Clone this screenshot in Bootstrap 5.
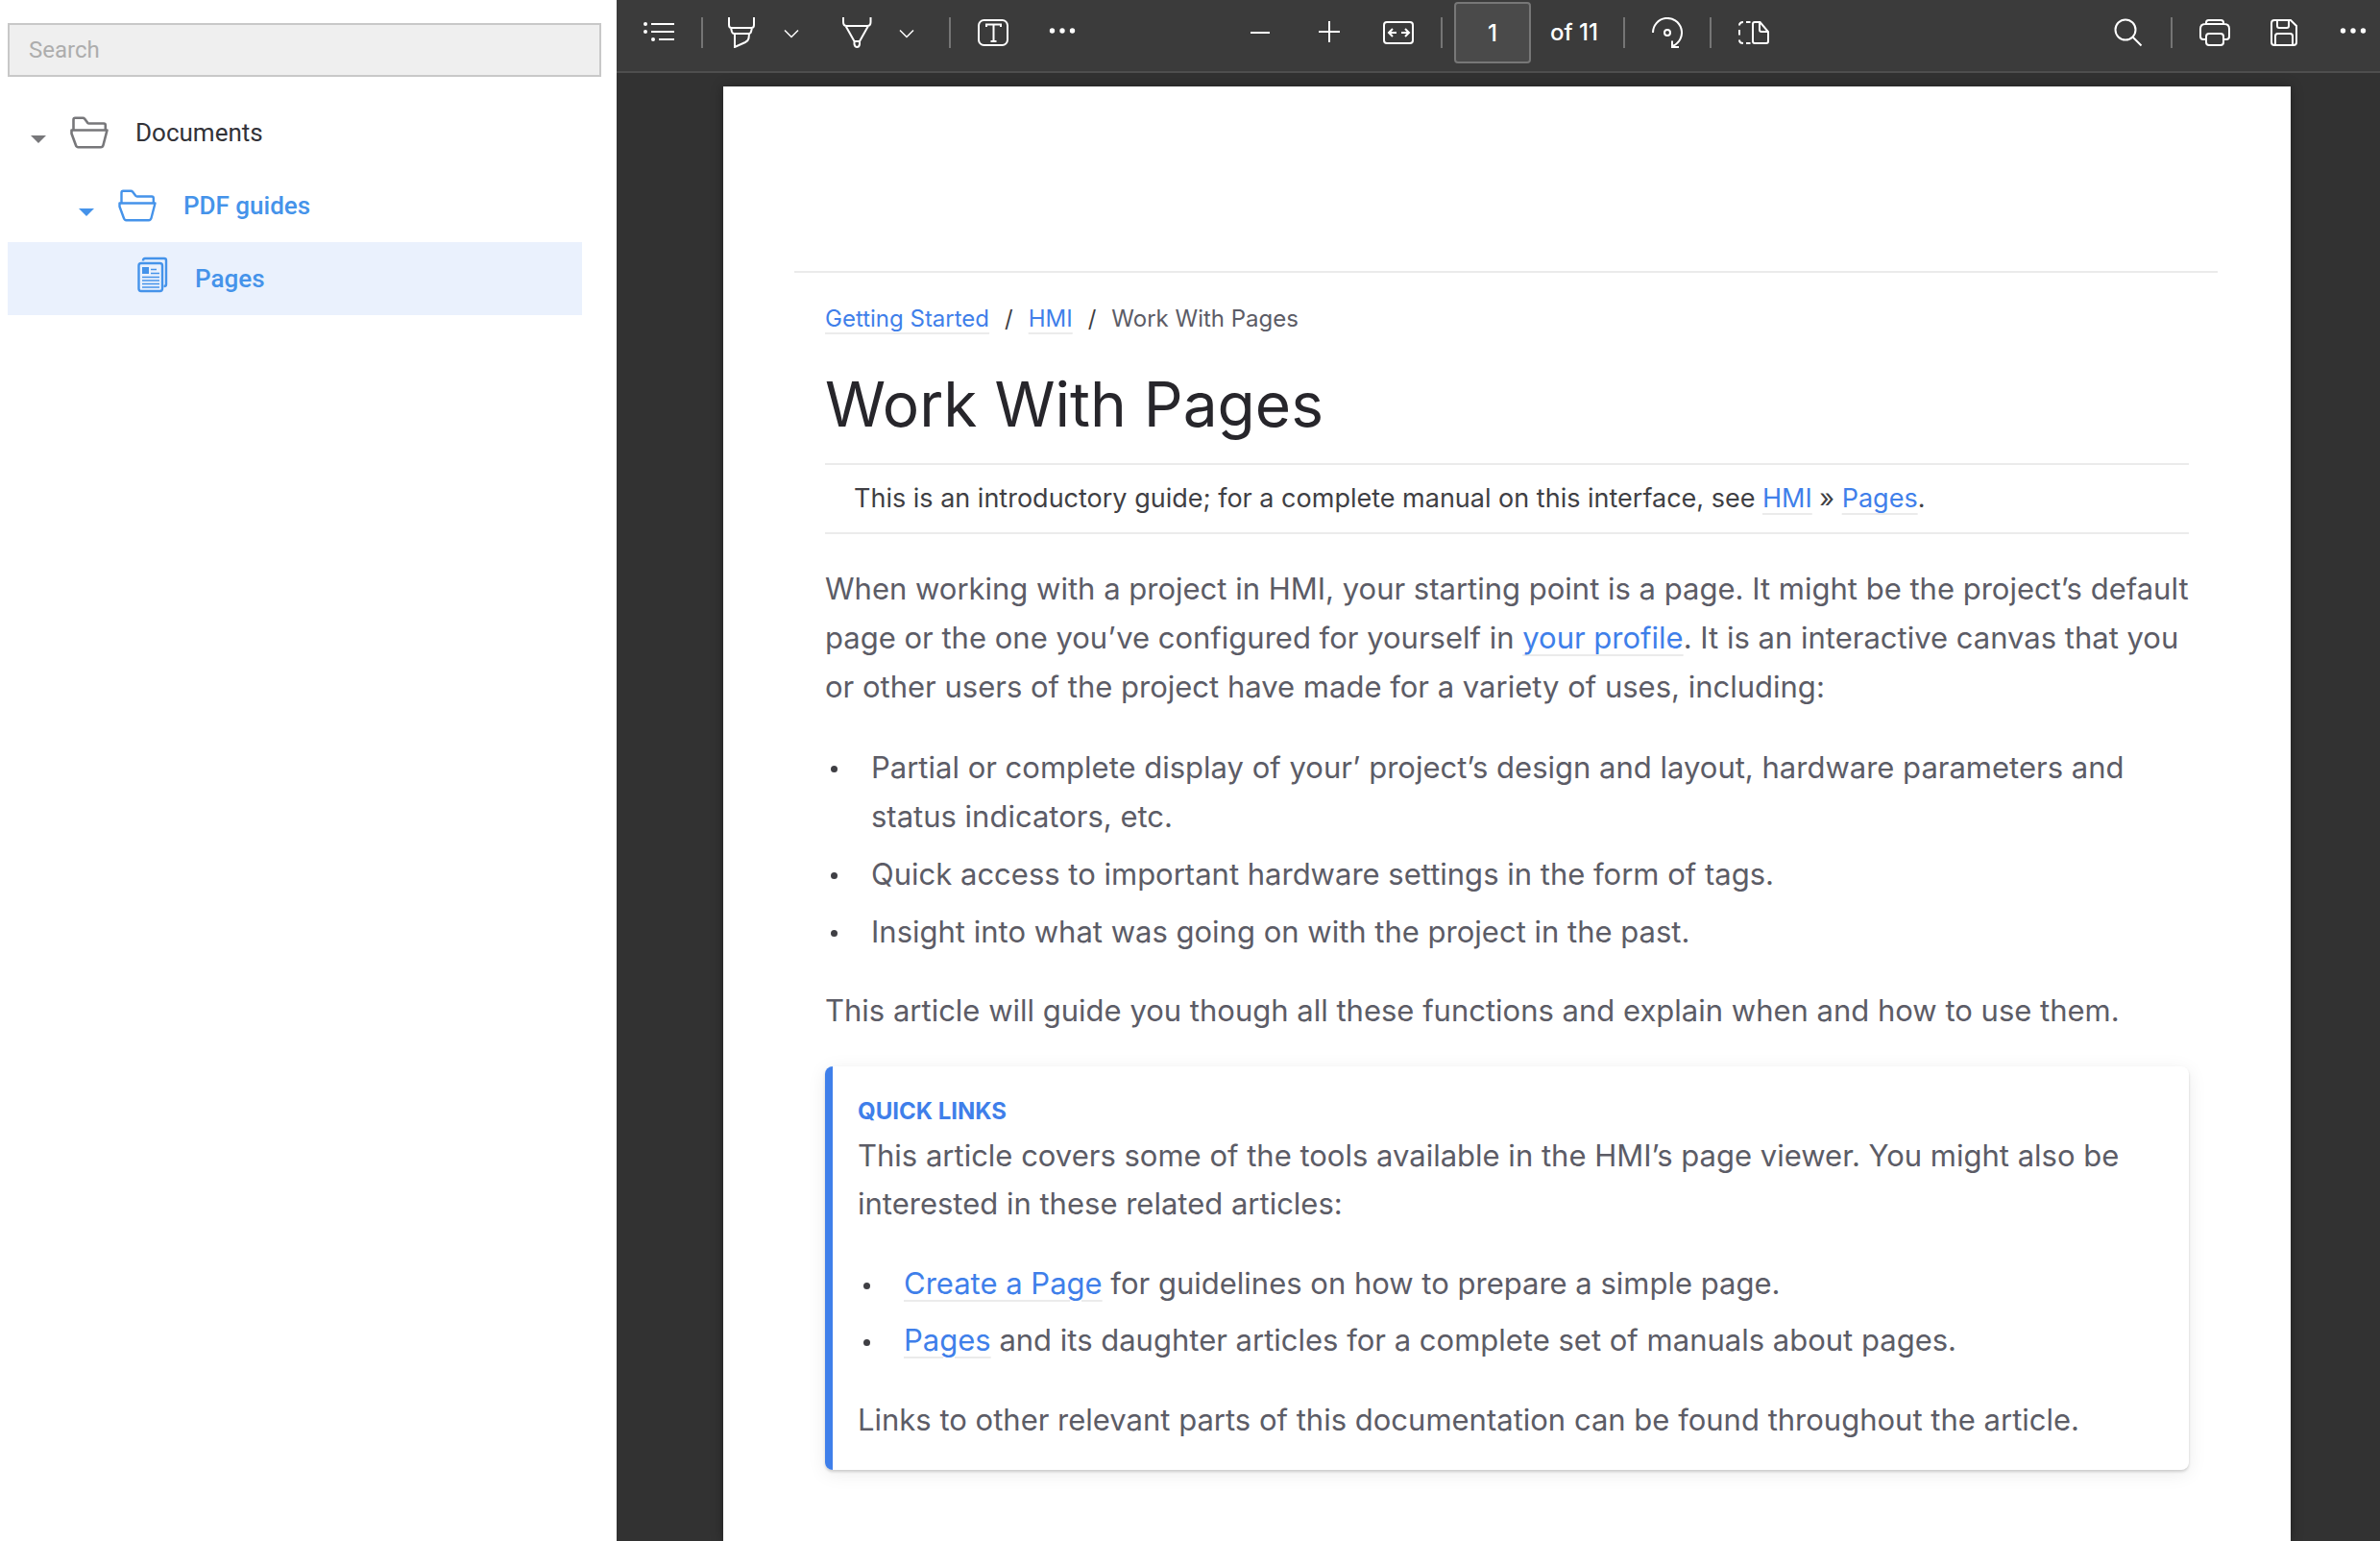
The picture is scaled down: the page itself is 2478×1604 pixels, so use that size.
<!DOCTYPE html>
<html lang="en">
<head>
<meta charset="utf-8">
<meta name="viewport" content="width=device-width, initial-scale=1">
<title>Work With Pages</title>
<link href="https://cdn.jsdelivr.net/npm/bootstrap@5.3.0/dist/css/bootstrap.min.css" rel="stylesheet">
<style>
  :root { --line: #ebebeb; --link: #3f7fea; --ink: #5c5c66; --tree: #4593ea; }
  body { font-family: Inter, "Liberation Sans", sans-serif; background: #323232; }
  button { color: inherit; }

  /* Document tree */
  .side-pane { width: 642px; padding: 24px 16px 0 8px; font-family: Roboto, "Liberation Sans", sans-serif; }
  .search-box { height: 56px; border: 2px solid #c8c8c8; border-radius: 0; background: #efefef; padding: 0 20px; font-size: 24px; }
  .search-box::placeholder { color: #adadad; }
  .tree { padding-top: 20px; margin-right: 20px; }
  .tree-row { height: 76px; padding-left: 24px; font-size: 26px; color: #323238; text-decoration: none; }
  .tree-row .caret { margin-top: 14px; margin-right: 25px; }
  .tree-row .kind { margin-right: 28px; color: #77777a; }
  .tree-row.level-2 { padding-left: 74px; }
  .tree-row.level-3 { padding-left: 135px; background: #eaf1fd; }
  .tree-row.open, .tree-row.open .kind { color: var(--tree); font-weight: 500; }
  .tree-row .caret { color: #77777a; }
  .tree-row.open .caret { color: var(--tree); }

  /* Viewer toolbar */
  .tools { height: 76px; padding: 0 0 6px 16px; border-bottom: 2px solid #4e4e4e; background: #3b3b3b; color: #fff; font-size: 24px; font-weight: 500; overflow: hidden; }
  .tool-set { gap: 16px; }
  .tool-set.middle { margin-left: 150px; }
  .tool { width: 56px; height: 56px; padding: 0; border: 0; background: none; display: flex; align-items: center; justify-content: center; flex: none; }
  .tool-split { gap: 8px; margin-right: 8px; }
  .tool-split .tool { width: 48px; }
  .tool-split .tool + .tool { width: 40px; }
  .rule-v { width: 2px; height: 32px; background: #757575; flex: none; }
  .page-no { gap: 20px; margin-left: -4px; padding-right: 10px; }
  .page-no input { width: 80px; height: 64px; border: 2px solid #777; border-radius: 4px; background: #4a4a4a; color: #fff; text-align: center; font-size: 24px; font-weight: 500; padding: 0; }
  .tools svg { width: 32px; height: 32px; fill: none; stroke: #fff; stroke-width: 2; flex: none; }
  .tools svg.thin { stroke-width: 1.5; }
  .tools svg .dot { fill: #fff; stroke: none; }

  /* Paper */
  .desk { padding: 14px 93px 0 111px; }
  .paper { background: #fff; padding: 192px 76px 74px 74px; box-shadow: 0 0 12px rgba(0,0,0,.3); }
  .paper-body { border-top: 2px solid var(--line); padding: 30px 30px 0 32px; font-size: 31px; line-height: 51px; color: var(--ink); }
  .paper-body a { color: var(--link); text-decoration: underline; text-decoration-color: var(--line); text-decoration-thickness: 2px; text-underline-offset: 6px; }
  .crumbs { font-size: 24px; line-height: 36px; margin-bottom: 29px; gap: 16px; }
  .crumbs .sep { color: #3f3f44; }
  .paper-body h1 { font-size: 64px; font-weight: 400; line-height: 84px; color: #27262b; margin-bottom: 19px; }
  .note { border-top: 2px solid var(--line); border-bottom: 2px solid var(--line); padding: 13px 30px; font-size: 27px; line-height: 44px; color: #3f3f44; margin-bottom: 31px; }
  .paper-body p { margin-bottom: 33px; }
  .paper-body ul { padding-left: 48px; margin-bottom: 31px; list-style: none; }
  .paper-body li { position: relative; margin-bottom: 9px; }
  .paper-body li:last-child { margin-bottom: 0; }
  .paper-body li::before { content: ""; position: absolute; left: -42px; top: 24px; width: 7px; height: 7px; border-radius: 50%; background: #3f3f44; }
  .callout { border-left: 8px solid var(--link); border-radius: 8px; padding: 32px 26px 27px; line-height: 50px; box-shadow: 0 2px 3px rgba(0,0,0,.16), 0 4px 20px rgba(0,0,0,.08); }
  .callout h2 { font-size: 24px; font-weight: 700; line-height: 30px; color: var(--link); margin-bottom: 6px; }
  .callout ul { margin-bottom: 33px; }
  .callout p:last-child { margin-bottom: 0; }
</style>
<script src="https://cdn.jsdelivr.net/npm/bootstrap@5.3.0/dist/js/bootstrap.bundle.min.js"></script>
</head>
<body>
<div class="d-flex min-vh-100">

  <aside class="side-pane bg-white flex-shrink-0">
    <label class="d-block" for="q" aria-label="Search documents"></label>
    <input id="q" type="text" class="form-control search-box" placeholder="Search">
    <nav class="tree" aria-label="Documents">
      <a href="#" class="tree-row d-flex align-items-center">
        <svg class="caret" width="16" height="8" viewBox="0 0 16 8" fill="currentColor"><path d="M0 0h16L8 8z"/></svg>
        <svg class="kind" width="40" height="34" viewBox="0 0 40 34" fill="none" stroke="currentColor" stroke-width="2.6" stroke-linejoin="round"><path d="M3.500 14V3.500q0-1.700 1.700-1.700h8q1.200 0 2 1l3 4q.6.700 1.500.700H35q1.800 0 1.800 1.800V14M1.500 14.500H38.500L34.500 30q-.6 2.200-2.600 2.200H8.500q-2 0-2.600-2.200L1.500 18z"/></svg>
        <span>Documents</span>
      </a>
      <a href="#" class="tree-row level-2 open d-flex align-items-center">
        <svg class="caret" width="16" height="8" viewBox="0 0 16 8" fill="currentColor"><path d="M0 0h16L8 8z"/></svg>
        <svg class="kind" width="40" height="34" viewBox="0 0 40 34" fill="none" stroke="currentColor" stroke-width="2.400" stroke-linejoin="round"><path d="M3.500 14V3.500q0-1.700 1.700-1.700h8q1.200 0 2 1l3 4q.6.700 1.500.700H35q1.800 0 1.800 1.800V14M1.500 14.500H38.500L34.500 30q-.6 2.200-2.600 2.200H8.500q-2 0-2.600-2.200L1.500 18z"/></svg>
        <span>PDF guides</span>
      </a>
      <a href="#" class="tree-row level-3 open d-flex align-items-center" aria-current="page">
        <svg class="kind mb-2" width="32" height="38" viewBox="0 0 32 38" fill="none" stroke="currentColor" stroke-width="2.400"><path d="M6 4.500V4q0-2 2-2H28q2 0 2 2V29q0 2-2.500 2"/><rect x="1.500" y="7" width="24.500" height="29" rx="2.500"/><path d="M5 11h7v7H5z" fill="currentColor" stroke="none"/><path d="M14 13.500h6M14 17.500h9M5 21.500h18M5 25h18M5 28.500h18M5 32h18" stroke-width="1.600"/></svg>
        <span>Pages</span>
      </a>
    </nav>
  </aside>

  <main class="d-flex flex-column flex-grow-1">
    <div class="tools d-flex align-items-center" role="toolbar" aria-label="Document tools">
      <div class="tool-set d-flex align-items-center">
        <button class="tool" aria-label="Contents"><svg viewBox="0 0 32 32"><path d="M8 7h24M8 15h24M16 23h16"/><g class="dot"><circle cx="2" cy="7" r="2"/><circle cx="2" cy="15" r="2"/><circle cx="10" cy="23" r="2"/></g></svg></button>
        <span class="rule-v"></span>
        <div class="tool-split d-flex">
          <button class="tool" aria-label="Highlight"><svg viewBox="0 0 32 32"><path d="M3 0V8q0 3 2.500 3H26.500Q29 11 29 8V0M5 11l1 4q.6 2 2.500 2H23.500q2 0 2.500-2l1-4M9 17V31L20 26q3-1.500 3.500-4l.5-5"/></svg></button>
          <button class="tool" aria-label="Highlight options"><svg class="thin" viewBox="0 0 32 32"><path d="M9 13.500l7 7 7-7"/></svg></button>
        </div>
        <div class="tool-split d-flex">
          <button class="tool" aria-label="Draw"><svg viewBox="0 0 32 32"><path d="M2 0V5q0 4 3.500 4H27q3.500 0 3.500-4V0M4.500 9L13.500 25M28 9L19 25M13.500 25H19V28q-.5 3-2.700 3t-2.800-3z"/></svg></button>
          <button class="tool" aria-label="Draw options"><svg class="thin" viewBox="0 0 32 32"><path d="M9 13.500l7 7 7-7"/></svg></button>
        </div>
        <span class="rule-v"></span>
        <button class="tool" aria-label="Add text"><svg viewBox="0 0 32 32"><rect x="1" y="3" width="30" height="26" rx="5.500"/><path d="M9 10V7.500H24V10M16.500 7.500V25M13.500 25h6"/></svg></button>
        <button class="tool" aria-label="More tools"><svg viewBox="0 0 32 32"><g class="dot"><circle cx="5.500" cy="14" r="2.700"/><circle cx="16" cy="14" r="2.700"/><circle cx="26.500" cy="14" r="2.700"/></g></svg></button>
      </div>

      <div class="tool-set middle d-flex align-items-center">
        <button class="tool" aria-label="Zoom out"><svg viewBox="0 0 32 32"><path d="M6 16h20"/></svg></button>
        <button class="tool" aria-label="Zoom in"><svg viewBox="0 0 32 32"><path d="M5 15h22M16 4v22"/></svg></button>
        <button class="tool" aria-label="Fit to width"><svg viewBox="0 0 32 32"><rect x="1" y="5" width="30" height="22" rx="3"/><path d="M14 16H6M10 12l-4 4 4 4M19 16h8M23 12l4 4-4 4"/></svg></button>
        <span class="rule-v"></span>
        <div class="page-no d-flex align-items-center">
          <input id="pageno" type="text" value="1">
          <label for="pageno">of 11</label>
        </div>
        <span class="rule-v"></span>
        <button class="tool" aria-label="Rotate"><svg viewBox="0 0 32 32"><path d="M1 16A15 15 0 1 1 22 29.700M21 24.500V31H28"/><circle cx="16" cy="16" r="3"/></svg></button>
        <span class="rule-v"></span>
        <button class="tool" aria-label="Page view"><svg viewBox="0 0 32 32"><path d="M15 7q0-2 2-2H22.500L31 15V25q0 2-2 2H17q-2 0-2-2zM22 5v8q0 2 2 2h7M5 5Q1 5 1 8.500M8 5h4.500M1 13v5.500M1 23.500Q1 27 5 27M8 27h4.500"/></svg></button>
      </div>

      <div class="tool-set d-flex align-items-center ms-auto">
        <button class="tool" aria-label="Find"><svg viewBox="0 0 32 32"><circle cx="13" cy="13" r="10.500"/><path d="M20.500 20.500L29.500 29.500"/></svg></button>
        <span class="rule-v"></span>
        <button class="tool" aria-label="Print"><svg viewBox="0 0 32 32"><path d="M7 7V5.500Q7 3 9.500 3H22.500Q25 3 25 5.500V7M7 23H4q-3 0-3-3V12q0-5 5-5H26q5 0 5 5v8q0 3-3 3H25"/><rect x="7" y="17" width="18" height="12" rx="3"/></svg></button>
        <button class="tool" aria-label="Save"><svg viewBox="0 0 32 32"><path d="M6 3H23L29 9V26q0 3-3 3H6q-3 0-3-3V6q0-3 3-3zM9 3V9q0 2 2 2h8q2 0 2-2V3M7 29V19.500Q7 17 9.500 17H22.500Q25 17 25 19.500V29"/></svg></button>
        <button class="tool" aria-label="More"><svg viewBox="0 0 32 32"><g class="dot"><circle cx="5.500" cy="14" r="2.700"/><circle cx="16" cy="14" r="2.700"/><circle cx="26.500" cy="14" r="2.700"/></g></svg></button>
      </div>
    </div>

    <div class="desk d-flex flex-column flex-grow-1">
      <article class="paper flex-grow-1">
        <div class="paper-body">
          <nav class="crumbs d-flex" aria-label="Breadcrumb">
            <a href="#">Getting Started</a><span class="sep">/</span><a href="#">HMI</a><span class="sep">/</span><span>Work With Pages</span>
          </nav>
          <h1>Work With Pages</h1>
          <div class="note">This is an introductory guide; for a complete manual on this interface, see <a href="#">HMI</a> » <a href="#">Pages</a>.</div>
          <p>When working with a project in HMI, your starting point is a page. It might be the project’s default page or the one you’ve configured for yourself in <a href="#">your profile</a>. It is an interactive canvas that you or other users of the project have made for a variety of uses, including:</p>
          <ul>
            <li>Partial or complete display of your’ project’s design and layout, hardware parameters and status indicators, etc.</li>
            <li>Quick access to important hardware settings in the form of tags.</li>
            <li>Insight into what was going on with the project in the past.</li>
          </ul>
          <p>This article will guide you though all these functions and explain when and how to use them.</p>
          <section class="callout">
            <h2>QUICK LINKS</h2>
            <p>This article covers some of the tools available in the HMI’s page viewer. You might also be interested in these related articles:</p>
            <ul>
              <li><a href="#">Create a Page</a> for guidelines on how to prepare a simple page.</li>
              <li><a href="#">Pages</a> and its daughter articles for a complete set of manuals about pages.</li>
            </ul>
            <p>Links to other relevant parts of this documentation can be found throughout the article.</p>
          </section>
        </div>
      </article>
    </div>
  </main>
</div>
</body>
</html>
